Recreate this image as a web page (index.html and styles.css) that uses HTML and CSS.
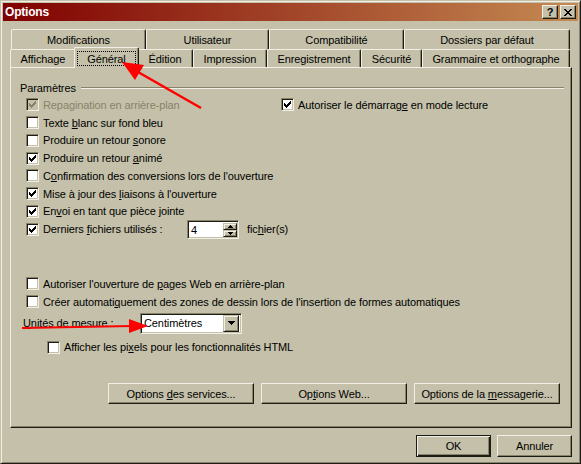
FILE: index.html
```html
<!DOCTYPE html>
<html lang="fr">
<head>
<meta charset="utf-8">
<title>Options</title>
<link rel="stylesheet" href="styles.css">
</head>
<body>
<div class="window">
  <div class="titlebar">
    <span class="title">Options</span>
    <div class="caption-btns">
      <span class="cbtn help">?</span>
      <span class="cbtn close"><svg width="8" height="7" viewBox="0 0 8 7" shape-rendering="crispEdges"><path d="M0 0h2v1H0zM6 0h2v1H6zM1 1h2v1H1zM5 1h2v1H5zM2 2h4v1H2zM3 3h2v1H3zM2 4h4v1H2zM1 5h2v1H1zM5 5h2v1H5zM0 6h2v1H0zM6 6h2v1H6z"/></svg></span>
    </div>
  </div>

  <div class="tabs">
    <div class="tabrow back">
      <div class="tab">Modifications</div>
      <div class="tab">Utilisateur</div>
      <div class="tab">Compatibilité</div>
      <div class="tab">Dossiers par défaut</div>
    </div>
    <div class="tabrow front">
      <div class="tab">Affichage</div>
      <div class="tab selected"><span class="focus">Général</span></div>
      <div class="tab">Édition</div>
      <div class="tab">Impression</div>
      <div class="tab">Enregistrement</div>
      <div class="tab">Sécurité</div>
      <div class="tab">Grammaire et orthographe</div>
    </div>
  </div>

  <div class="panel">
    <div class="group-head"><span>Paramètres</span><i class="etch"></i></div>
    <div class="opts">
      <div class="row split">
        <label class="chk disabled"><span class="box"><svg viewBox="0 0 9 9" shape-rendering="crispEdges"><path d="M1 3h1v3H1zM2 4h1v3H2zM3 5h1v3H3zM4 4h1v3H4zM5 3h1v3H5zM6 2h1v3H6zM7 1h1v3H7z"/></svg></span><span class="lbl">Repagination en arrière-plan</span></label>
        <label class="chk"><span class="box"><svg viewBox="0 0 9 9" shape-rendering="crispEdges"><path d="M1 3h1v3H1zM2 4h1v3H2zM3 5h1v3H3zM4 4h1v3H4zM5 3h1v3H5zM6 2h1v3H6zM7 1h1v3H7z"/></svg></span><span class="lbl">Autoriser le démarrag<u>e</u> en mode lecture</span></label>
      </div>
      <div class="row"><label class="chk"><span class="box"></span><span class="lbl">Texte <u>b</u>lanc sur fond bleu</span></label></div>
      <div class="row"><label class="chk"><span class="box"></span><span class="lbl">Produire un retour <u>s</u>onore</span></label></div>
      <div class="row"><label class="chk"><span class="box"><svg viewBox="0 0 9 9" shape-rendering="crispEdges"><path d="M1 3h1v3H1zM2 4h1v3H2zM3 5h1v3H3zM4 4h1v3H4zM5 3h1v3H5zM6 2h1v3H6zM7 1h1v3H7z"/></svg></span><span class="lbl">Produire un retour <u>a</u>nimé</span></label></div>
      <div class="row"><label class="chk"><span class="box"></span><span class="lbl">C<u>o</u>nfirmation des conversions lors de l'ouverture</span></label></div>
      <div class="row"><label class="chk"><span class="box"><svg viewBox="0 0 9 9" shape-rendering="crispEdges"><path d="M1 3h1v3H1zM2 4h1v3H2zM3 5h1v3H3zM4 4h1v3H4zM5 3h1v3H5zM6 2h1v3H6zM7 1h1v3H7z"/></svg></span><span class="lbl">Mise à jour des <u>l</u>iaisons à l'ouverture</span></label></div>
      <div class="row"><label class="chk"><span class="box"><svg viewBox="0 0 9 9" shape-rendering="crispEdges"><path d="M1 3h1v3H1zM2 4h1v3H2zM3 5h1v3H3zM4 4h1v3H4zM5 3h1v3H5zM6 2h1v3H6zM7 1h1v3H7z"/></svg></span><span class="lbl">En<u>v</u>oi en tant que pièce jointe</span></label></div>
      <div class="row recent">
        <label class="chk"><span class="box"><svg viewBox="0 0 9 9" shape-rendering="crispEdges"><path d="M1 3h1v3H1zM2 4h1v3H2zM3 5h1v3H3zM4 4h1v3H4zM5 3h1v3H5zM6 2h1v3H6zM7 1h1v3H7z"/></svg></span><span class="lbl recent-label">Derniers <u>f</u>ichiers utilisés :</span></label>
        <span class="field spin"><span class="val">4</span><span class="spin-btns"><span class="sbtn"><svg width="5" height="3" viewBox="0 0 5 3" shape-rendering="crispEdges"><path d="M2 0h1v1h1v1h1v1H0V2h1V1h1z"/></svg></span><span class="sbtn"><svg width="5" height="3" viewBox="0 0 5 3" shape-rendering="crispEdges"><path d="M0 0h5v1H4v1H3v1H2V2H1V1H0z"/></svg></span></span></span>
        <span class="suffix">fic<u>h</u>ier(s)</span>
      </div>

      <div class="row gap-top"><label class="chk"><span class="box"></span><span class="lbl">Autoriser l'ouverture de <u>p</u>ages Web en arrière-plan</span></label></div>
      <div class="row"><label class="chk"><span class="box"></span><span class="lbl">Créer automati<u>q</u>uement des zones de dessin lors de l'insertion de formes automatiques</span></label></div>
      <div class="units">
        <span class="units-label"><u>U</u>nités de mesure :</span>
        <span class="field combo"><span class="val">Centimètres</span><span class="dd"><svg width="7" height="4" viewBox="0 0 7 4" shape-rendering="crispEdges"><path d="M0 0h7v1H6v1H5v1H4v1H3V3H2V2H1V1H0z"/></svg></span></span>
      </div>
      <div class="row pixels"><label class="chk"><span class="box"></span><span class="lbl">Afficher les pi<u>x</u>els pour les fonctionnalités HTML</span></label></div>
    </div>

    <div class="service-btns">
      <button class="btn wide">Options <u>d</u>es services...</button>
      <button class="btn wide">Op<u>t</u>ions Web...</button>
      <button class="btn wide">Options de la <u>m</u>essagerie...</button>
    </div>
  </div>

  <div class="footer">
    <button class="btn default">OK</button>
    <button class="btn">Annuler</button>
  </div>

  <svg class="annot" width="581" height="464" viewBox="0 0 581 464">
    <line x1="201" y1="108" x2="138" y2="72" stroke="#f00" stroke-width="2.5"/>
    <polygon points="122,62 144,65 135,80" fill="#f00"/>
    <line x1="22" y1="328" x2="132" y2="326" stroke="#f00" stroke-width="2"/>
    <polygon points="148,326 129,319 129,333" fill="#f00"/>
  </svg>
</div>
</body>
</html>
```

FILE: styles.css
```css
:root {
  --face: #c4c0a9;
  --hl: #f1efe5;
  --shadow: #878469;
  --dark: #1c1c14;
}

* { box-sizing: border-box; }

html, body {
  margin: 0;
  background: var(--face);
}

body {
  font: 11px "Liberation Sans", Arial, sans-serif;
  letter-spacing: -0.1px;
  color: #000;
}

u { text-decoration: underline; text-underline-offset: 1px; }

.window {
  position: relative;
  width: 581px;
  height: 464px;
  border: 1px solid;
  border-color: var(--face) var(--dark) var(--dark) var(--face);
  box-shadow: inset 1px 1px var(--hl), inset -1px -1px var(--shadow);
  padding: 2px;
  display: flex;
  flex-direction: column;
  background: var(--face);
}

/* title bar */
.titlebar {
  height: 18px;
  flex: none;
  display: flex;
  align-items: center;
  background: linear-gradient(to right, #800000, #c48a52);
  color: #fff;
  padding-left: 2px;
}
.title { font-weight: bold; font-size: 12px; letter-spacing: -0.2px; flex: 1; }
.caption-btns { display: flex; gap: 2px; margin-right: 2px; }
.cbtn {
  width: 16px;
  height: 14px;
  background: var(--face);
  border: 1px solid;
  border-color: var(--hl) var(--dark) var(--dark) var(--hl);
  box-shadow: inset -1px -1px var(--shadow);
  display: flex;
  align-items: center;
  justify-content: center;
  color: #000;
  font-weight: bold;
  font-size: 11px;
  line-height: 1;
}

/* tabs */
.tabs {
  margin: 8px 0 0 7px;
  position: relative;
  z-index: 1;
  flex: none;
}
.tabrow { display: grid; }
.tabrow.back {
  grid-template-columns: 135px 123px 135px 166px;
  height: 20px;
  margin-left: 1px;
}
.tabrow.front {
  grid-template-columns: 66px 61px 56px 74px 94px 61px 148px;
  height: 18px;
}
.tab {
  background: var(--face);
  border-left: 1px solid var(--hl);
  border-top: 1px solid var(--hl);
  border-right: 1px solid var(--dark);
  box-shadow: inset -1px 0 var(--shadow);
  border-radius: 2px 2px 0 0;
  display: flex;
  align-items: center;
  justify-content: center;
  white-space: nowrap;
}
.tab.selected {
  margin: -2px -2px -1px;
  position: relative;
  z-index: 2;
  align-items: stretch;
}
.focus {
  flex: 1;
  margin: 3px 2px 2px 2px;
  outline: 1px dotted #000;
  outline-offset: -1px;
  display: flex;
  align-items: center;
  justify-content: center;
}

/* panel */
.panel {
  margin-left: 7px;
  width: 562px;
  height: 361px;
  flex: none;
  border: 1px solid;
  border-color: var(--hl) var(--dark) var(--dark) var(--hl);
  box-shadow: inset -1px -1px var(--shadow);
  padding: 14px 7px 23px 9px;
  display: flex;
  flex-direction: column;
}

.group-head {
  display: flex;
  align-items: center;
  gap: 5px;
  height: 12px;
}
.etch {
  flex: 1;
  height: 2px;
  border-top: 1px solid var(--shadow);
  border-bottom: 1px solid var(--hl);
}

.opts {
  padding-left: 6px;
  margin-top: 2px;
  display: flex;
  flex-direction: column;
}
.row {
  display: flex;
  align-items: center;
  height: 17.75px;
}
.chk {
  display: flex;
  align-items: center;
  gap: 4px;
  white-space: nowrap;
}
.split .chk:first-child { width: 255px; }

.box {
  width: 13px;
  height: 13px;
  flex: none;
  background: #fff;
  border: 1px solid;
  border-color: var(--shadow) var(--hl) var(--hl) var(--shadow);
  box-shadow: inset 1px 1px var(--dark), inset -1px -1px var(--face);
  padding: 1px;
  display: flex;
}
.box svg { width: 9px; height: 9px; display: block; }
.box svg path { fill: #000; }

.disabled { color: var(--shadow); }
.disabled .box { background: var(--face); }
.disabled .box svg path { fill: var(--shadow); }

.recent-label { width: 144px; }
.suffix { margin-left: 8px; }

.field {
  background: #fff;
  border: 1px solid;
  border-color: var(--shadow) var(--hl) var(--hl) var(--shadow);
  box-shadow: inset 1px 1px var(--dark), inset -1px -1px var(--face);
  padding: 2px;
  display: flex;
  align-items: center;
}
.field .val { flex: 1; padding-left: 1px; }

.spin { width: 52px; height: 19px; align-items: stretch; padding: 2px 1px 1px 2px; }
.spin .val { display: flex; align-items: center; }
.spin-btns { display: flex; flex-direction: column; width: 14px; }
.sbtn, .dd {
  background: var(--face);
  border: 1px solid;
  border-color: var(--face) var(--dark) var(--dark) var(--face);
  box-shadow: inset 1px 1px var(--hl), inset -1px -1px var(--shadow);
  display: flex;
  align-items: center;
  justify-content: center;
}
.sbtn { flex: 1; }
.sbtn svg path, .dd svg path { fill: #000; }

.gap-top { margin-top: 37px; }

.units {
  display: flex;
  align-items: center;
  height: 21px;
  margin-top: 2px;
  margin-left: -3px;
}
.units-label { width: 117px; }
.combo { width: 102px; height: 21px; padding: 2px; }
.combo .val { padding-left: 1px; }
.dd { width: 16px; height: 17px; flex: none; }

.pixels { margin-top: 5px; margin-left: 21px; }

/* buttons */
.btn {
  font: inherit;
  letter-spacing: inherit;
  color: #000;
  background: var(--face);
  border: 1px solid;
  border-color: var(--hl) var(--dark) var(--dark) var(--hl);
  box-shadow: inset -1px -1px var(--shadow);
  padding: 0;
  margin: 0;
  height: 22px;
  width: 75px;
}
.btn.default {
  border-color: var(--dark);
  box-shadow: inset 1px 1px var(--hl), inset -1px -1px var(--dark), inset -2px -2px var(--shadow);
}
.service-btns {
  margin-top: auto;
  margin-right: 4px;
  display: flex;
  justify-content: flex-end;
  gap: 7px;
}
.btn.wide { width: 146px; height: 21px; }

.footer {
  margin-top: 7px;
  padding-right: 6px;
  display: flex;
  justify-content: flex-end;
  gap: 6px;
}

/* annotation overlay */
.annot {
  position: absolute;
  left: -1px;
  top: -1px;
  pointer-events: none;
  z-index: 5;
}
```
